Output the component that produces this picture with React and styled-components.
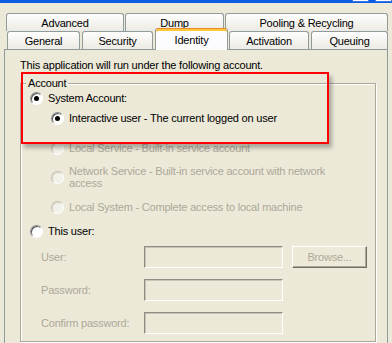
import React from 'react';
import styled, { createGlobalStyle } from 'styled-components';

const GlobalStyle = createGlobalStyle`
  html, body {
    margin: 0;
    padding: 0;
    background: #ece9d8;
  }
  body {
    font-family: "Liberation Sans", Arial, sans-serif;
    font-size: 11px;
    letter-spacing: -0.2px;
    color: #000;
  }
`;

const Window = styled.div`
  position: relative;
  width: 392px;
  height: 343px;
  overflow: hidden;
  background: #ece9d8;
`;

const TitleEdge = styled.div`
  height: 3px;
  background: #0c5ce4;
  display: flex;
  justify-content: flex-end;
  gap: 6px;
`;

const CaptionButton = styled.span`
  box-sizing: border-box;
  width: 17px;
  height: 2px;
  background: #fff;
  border: 1px solid #3a74e8;
  border-top: none;
`;

const TabStrip = styled.div`
  padding-top: 10px;
`;

const TabRow = styled.div`
  display: flex;
  align-items: flex-end;
  height: 18px;
  padding-left: ${p => p.$indent}px;
`;

const Tab = styled.div`
  position: relative;
  box-sizing: border-box;
  width: ${p => p.$w}px;
  height: ${p => (p.$active ? 22 : 18)}px;
  margin-right: ${p => p.$gap || 0}px;
  margin-bottom: ${p => (p.$active ? -1 : 0)}px;
  z-index: ${p => (p.$active ? 2 : 1)};
  display: flex;
  align-items: center;
  justify-content: center;
  padding-top: ${p => (p.$active ? 1 : 0)}px;
  border: 1px solid #919b9c;
  border-bottom: none;
  border-radius: 3px 3px 0 0;
  border-top-color: ${p => (p.$active ? '#e68b2c' : '#919b9c')};
  background: ${p => (p.$active ? '#fcfcfe' : 'linear-gradient(#fefefe, #f4f3ee 55%, #ebeae4)')};
  box-shadow: ${p => (p.$active ? 'inset 0 2px 0 #ffc83c' : 'none')};
  font-size: 11px;
  color: #000;
  white-space: nowrap;
`;

const Panel = styled.div`
  box-sizing: border-box;
  margin-left: 4px;
  width: 384px;
  height: 320px;
  border: 1px solid #919b9c;
  padding: 9px 11px 0 15px;
  background: #ece9d8;
`;

const Intro = styled.div`
  line-height: 13px;
  white-space: nowrap;
`;

const Group = styled.fieldset`
  margin: 4px 0 0 0;
  padding: 0 0 7px 9px;
  border: 1px solid #aca899;
  box-shadow: inset 1px 1px 0 #fff, 1px 1px 0 #fff;
  min-inline-size: 0;
`;

const Legend = styled.legend`
  margin-left: -4px;
  padding: 0 2px;
  line-height: 14px;
  background: #ece9d8;
`;

const Option = styled.label`
  display: flex;
  align-items: center;
  gap: 5px;
  margin-top: ${p => p.$mt}px;
  padding-left: ${p => (p.$indent ? 21 : 0)}px;
  line-height: ${p => (p.$tall ? 12 : 14)}px;
  color: ${p => (p.$disabled ? '#aca899' : '#000')};
  white-space: nowrap;
`;

const Radio = styled.span`
  position: relative;
  flex: none;
  box-sizing: border-box;
  width: 13px;
  height: 13px;
  border-radius: 50%;
  border: 1px solid;
  border-color: ${p => (p.$disabled ? '#c4c1b1 #fff #fff #c4c1b1' : '#8a8a8a #fff #fff #8a8a8a')};
  background: ${p => (p.$disabled ? '#f3f2ea' : '#fff')};
  box-shadow: ${p => (p.$disabled ? 'inset 1px 1px 0 #dcd9cc' : 'inset 1px 1px 0 #5a5a5a')};

  &::after {
    content: '';
    display: ${p => (p.$checked ? 'block' : 'none')};
    position: absolute;
    left: 3px;
    top: 3px;
    width: 5px;
    height: 5px;
    border-radius: 50%;
    background: #000;
  }
`;

const FieldRow = styled.div`
  display: grid;
  grid-template-columns: 94px 139px 75px;
  column-gap: 9px;
  align-items: center;
  margin-top: ${p => p.$mt}px;
  padding-left: 11px;
`;

const FieldLabel = styled.span`
  color: #aca899;
  white-space: nowrap;
`;

const TextBox = styled.input`
  box-sizing: border-box;
  width: 139px;
  height: 22px;
  margin: 0;
  border: 1px solid;
  border-color: #8e8c83 #fff #fff #8e8c83;
  box-shadow: inset 1px 1px 0 #c8c5b7;
  background: #ece9d8;
`;

const Button = styled.button`
  box-sizing: border-box;
  width: 75px;
  height: 22px;
  margin: 0;
  padding: 0;
  border: 1px solid;
  border-color: #fff #716f64 #716f64 #fff;
  box-shadow: inset -1px -1px 0 #aca899;
  background: #ece9d8;
  font-family: "Liberation Sans", Arial, sans-serif;
  font-size: 11px;
  letter-spacing: -0.2px;
  color: #aca899;
`;

const Highlight = styled.div`
  position: absolute;
  left: 21px;
  top: 72px;
  width: 308px;
  height: 72px;
  box-sizing: border-box;
  border: 2px solid #ff0000;
  box-shadow: 3px 4px 4px rgba(0, 0, 0, 0.28);
  pointer-events: none;
`;

const upperTabs = [
  { label: 'Advanced', w: 118, gap: 1 },
  { label: 'Dump', w: 99, gap: 1 },
  { label: 'Pooling & Recycling', w: 163 },
];

const lowerTabs = [
  { label: 'General', w: 73, gap: 2 },
  { label: 'Security', w: 71, gap: 2 },
  { label: 'Identity', w: 73, gap: 1, active: true },
  { label: 'Activation', w: 80, gap: 2 },
  { label: 'Queuing', w: 77 },
];

const fields = [
  { label: 'User:', mt: 8, browse: true },
  { label: 'Password:', mt: 11 },
  { label: 'Confirm password:', mt: 11 },
];

export default function App() {
  return (
    <Window>
      <GlobalStyle />
      <TitleEdge>
        <CaptionButton />
        <CaptionButton />
      </TitleEdge>

      <TabStrip>
        <TabRow $indent={6}>
          {upperTabs.map(t => (
            <Tab key={t.label} $w={t.w} $gap={t.gap}>{t.label}</Tab>
          ))}
        </TabRow>
        <TabRow $indent={7}>
          {lowerTabs.map(t => (
            <Tab key={t.label} $w={t.w} $gap={t.gap} $active={t.active}>{t.label}</Tab>
          ))}
        </TabRow>
      </TabStrip>

      <Panel>
        <Intro>This application will run under the following account.</Intro>
        <Group>
          <Legend>Account</Legend>
          <Option $mt={1}>
            <Radio $checked />
            System Account:
          </Option>
          <Option $mt={6} $indent>
            <Radio $checked />
            Interactive user - The current logged on user
          </Option>
          <Option $mt={16} $indent $disabled>
            <Radio $disabled />
            Local Service - Built-in service account
          </Option>
          <Option $mt={10} $indent $disabled $tall>
            <Radio $disabled />
            <span>
              Network Service - Built-in service account with network
              <br />
              access
            </span>
          </Option>
          <Option $mt={11} $indent $disabled>
            <Radio $disabled />
            Local System - Complete access to local machine
          </Option>
          <Option $mt={10}>
            <Radio />
            This user:
          </Option>
          {fields.map(f => (
            <FieldRow key={f.label} $mt={f.mt}>
              <FieldLabel>{f.label}</FieldLabel>
              <TextBox disabled />
              {f.browse && <Button disabled>Browse...</Button>}
            </FieldRow>
          ))}
        </Group>
      </Panel>

      <Highlight />
    </Window>
  );
}
